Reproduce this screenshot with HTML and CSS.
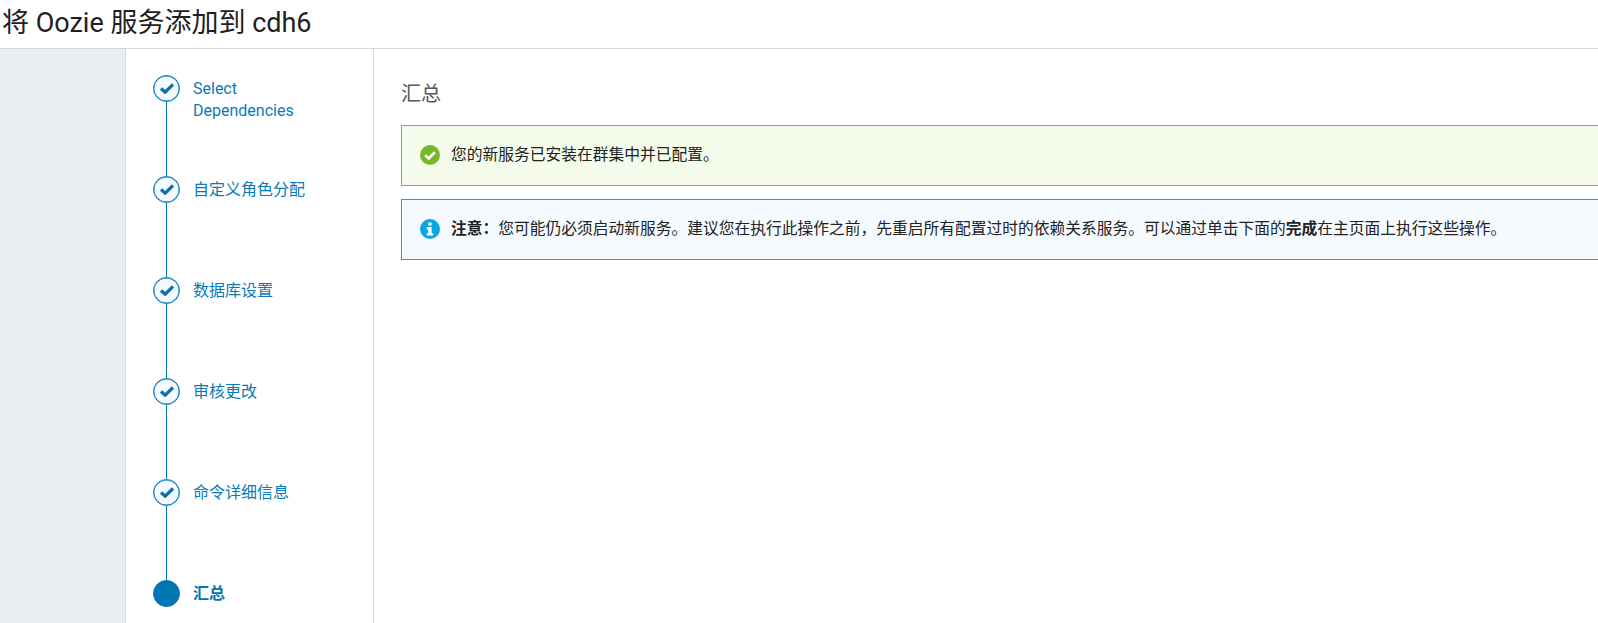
FILE: index.html
```html
<!DOCTYPE html>
<html lang="zh-CN">
<head>
<meta charset="utf-8">
<title>将 Oozie 服务添加到 cdh6</title>
<link rel="stylesheet" href="styles.css">
</head>
<body>
<header class="page-header"><h1 class="page-title">将 Oozie 服务添加到 cdh6</h1></header>
<div class="layout">
  <aside class="rail"></aside>
  <nav class="steps">
    <div class="step">
      <div class="marker"><span class="dot"><svg class="check" viewBox="0 0 14 11"><path d="M1 5.4 5.2 9.2 13 1.4"/></svg></span><span class="line"></span></div>
      <a class="label">Select<br>Dependencies</a>
    </div>
    <div class="step">
      <div class="marker"><span class="dot"><svg class="check" viewBox="0 0 14 11"><path d="M1 5.4 5.2 9.2 13 1.4"/></svg></span><span class="line"></span></div>
      <a class="label">自定义角色分配</a>
    </div>
    <div class="step">
      <div class="marker"><span class="dot"><svg class="check" viewBox="0 0 14 11"><path d="M1 5.4 5.2 9.2 13 1.4"/></svg></span><span class="line"></span></div>
      <a class="label">数据库设置</a>
    </div>
    <div class="step">
      <div class="marker"><span class="dot"><svg class="check" viewBox="0 0 14 11"><path d="M1 5.4 5.2 9.2 13 1.4"/></svg></span><span class="line"></span></div>
      <a class="label">审核更改</a>
    </div>
    <div class="step">
      <div class="marker"><span class="dot"><svg class="check" viewBox="0 0 14 11"><path d="M1 5.4 5.2 9.2 13 1.4"/></svg></span><span class="line"></span></div>
      <a class="label">命令详细信息</a>
    </div>
    <div class="step step-current">
      <div class="marker"><span class="dot"></span></div>
      <a class="label">汇总</a>
    </div>
  </nav>
  <main class="content">
    <h2 class="section-title">汇总</h2>
    <div class="alert alert-success">
      <svg class="alert-icon" viewBox="0 0 20 20"><circle cx="10" cy="10" r="10" fill="#76b82a"/><path d="M5.2 10.2 8.7 13.4 14.8 7.2" fill="none" stroke="#fff" stroke-width="2.8"/></svg>
      <span>您的新服务已安装在群集中并已配置。</span>
    </div>
    <div class="alert alert-info">
      <svg class="alert-icon" viewBox="0 0 20 20"><circle cx="10" cy="10" r="10" fill="#0ba5e0"/><path d="M8.2 3.4h3.4v3H8.2zM6.8 8h4.8v6.2h1.6v2.4H6.8v-2.4h1.4v-3.8H6.8z" fill="#fff"/></svg>
      <span><b class="strong">注意：</b>您可能仍必须启动新服务。建议您在执行此操作之前，先重启所有配置过时的依赖关系服务。可以通过单击下面的<b class="strong">完成</b>在主页面上执行这些操作。</span>
    </div>
  </main>
</div>
</body>
</html>
```
FILE: styles.css
```css
html, body {
  margin: 0;
  height: 100%;
  overflow: hidden;
  background: #fff;
}
body {
  font-family: Roboto, "Noto Sans CJK SC", sans-serif;
  font-size: 16px;
  color: #222;
  display: flex;
  flex-direction: column;
}
.page-header {
  height: 48px;
  flex: none;
  border-bottom: 1px solid #d6d8dc;
}
.page-title {
  margin: 0;
  padding: 4px 0 0 2px;
  font-size: 27px;
  line-height: 38px;
  font-weight: 400;
  color: #1f2024;
}
.layout {
  flex: 1;
  display: flex;
  min-height: 0;
}
.rail {
  width: 125px;
  flex: none;
  background: #e9edf0;
  border-right: 1px solid #d6d8dc;
}
.steps {
  flex: none;
  width: 248px;
  padding: 26px 0 0 27px;
  box-sizing: border-box;
  border-right: 1px solid #d6d8dc;
}
.step {
  display: flex;
  height: 101px;
  gap: 13px;
}
.step-current {
  height: auto;
}
.marker {
  width: 27px;
  flex: none;
  display: flex;
  flex-direction: column;
  align-items: center;
}
.dot {
  width: 27px;
  height: 27px;
  flex: none;
  box-sizing: border-box;
  border: 1px solid #0077b3;
  border-radius: 50%;
  background: #f5fafe;
  box-shadow: inset 0 0 0 0.4px #0077b3;
  display: flex;
  align-items: center;
  justify-content: center;
}
.step-current .dot {
  background: #0077b3;
}
.check {
  width: 14px;
  height: 11px;
  fill: none;
  stroke: #0f6fa8;
  stroke-width: 3.2;
}
.line {
  width: 1px;
  flex: 1;
  background: #0077b3;
}
.label {
  color: #0a7ab5;
  font-size: 16px;
  line-height: 22px;
  padding-top: 3px;
}
.step-current .label {
  font-weight: 700;
  color: #0077b3;
}
.content {
  flex: 1;
  min-width: 0;
  overflow: hidden;
  padding: 31px 0 0 27px;
}
.section-title {
  margin: 0 0 16px;
  font-size: 20px;
  line-height: 29px;
  font-weight: 400;
  color: #54585f;
}
.alert {
  width: 1300px;
  height: 61px;
  box-sizing: border-box;
  display: flex;
  align-items: center;
  gap: 11px;
  padding: 0 0 2px 18px;
  margin-bottom: 13px;
  border: 1px solid;
  font-size: 15.75px;
  line-height: 22px;
  color: #222;
}
.alert-success {
  background: #f4fbeb;
  border-color: #7fb640;
}
.alert-info {
  background: #f5fafe;
  border-color: #1a9fd6;
}
.alert-icon {
  width: 20px;
  height: 20px;
  flex: none;
}
.strong {
  font-weight: 700;
}
```
